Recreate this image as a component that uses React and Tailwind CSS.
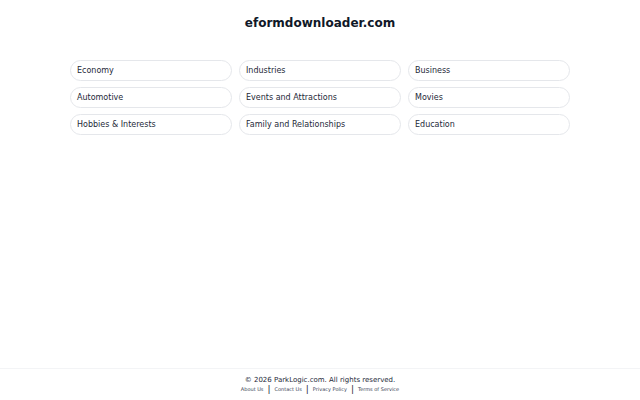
import React from "react";

const topics = [
  "Economy",
  "Industries",
  "Business",
  "Automotive",
  "Events and Attractions",
  "Movies",
  "Hobbies & Interests",
  "Family and Relationships",
  "Education",
];

const links = ["About Us", "Contact Us", "Privacy Policy", "Terms of Service"];

export default function App() {
  return (
    <div
      className="flex flex-col min-h-[400px] bg-white text-gray-900"
      style={{ fontFamily: '"DejaVu Sans", sans-serif' }}
    >
      <main className="flex-1">
        <h1 className="text-center font-bold text-[12px] pt-[16px] leading-[15px]">
          eformdownloader.com
        </h1>
        <div className="grid grid-cols-3 gap-x-[7px] gap-y-[6px] w-[500px] mx-auto mt-[29px]">
          {topics.map((t) => (
            <div
              key={t}
              className="h-[21px] flex items-center px-[6px] rounded-full border border-gray-200 text-[8px] text-gray-800"
            >
              {t}
            </div>
          ))}
        </div>
      </main>
      <footer className="border-t border-gray-100 h-[32px] flex flex-col items-center pt-[7px]">
        <p className="text-[7px] leading-[9px] text-gray-800">
          © 2026 ParkLogic.com. All rights reserved.
        </p>
        <div className="flex items-center text-[5px] text-gray-700 leading-[9px]">
          {links.map((l, i) => (
            <React.Fragment key={l}>
              {i > 0 && <span className="mx-[4px] text-[9px] leading-[9px] text-gray-800">|</span>}
              <span>{l}</span>
            </React.Fragment>
          ))}
        </div>
      </footer>
    </div>
  );
}
